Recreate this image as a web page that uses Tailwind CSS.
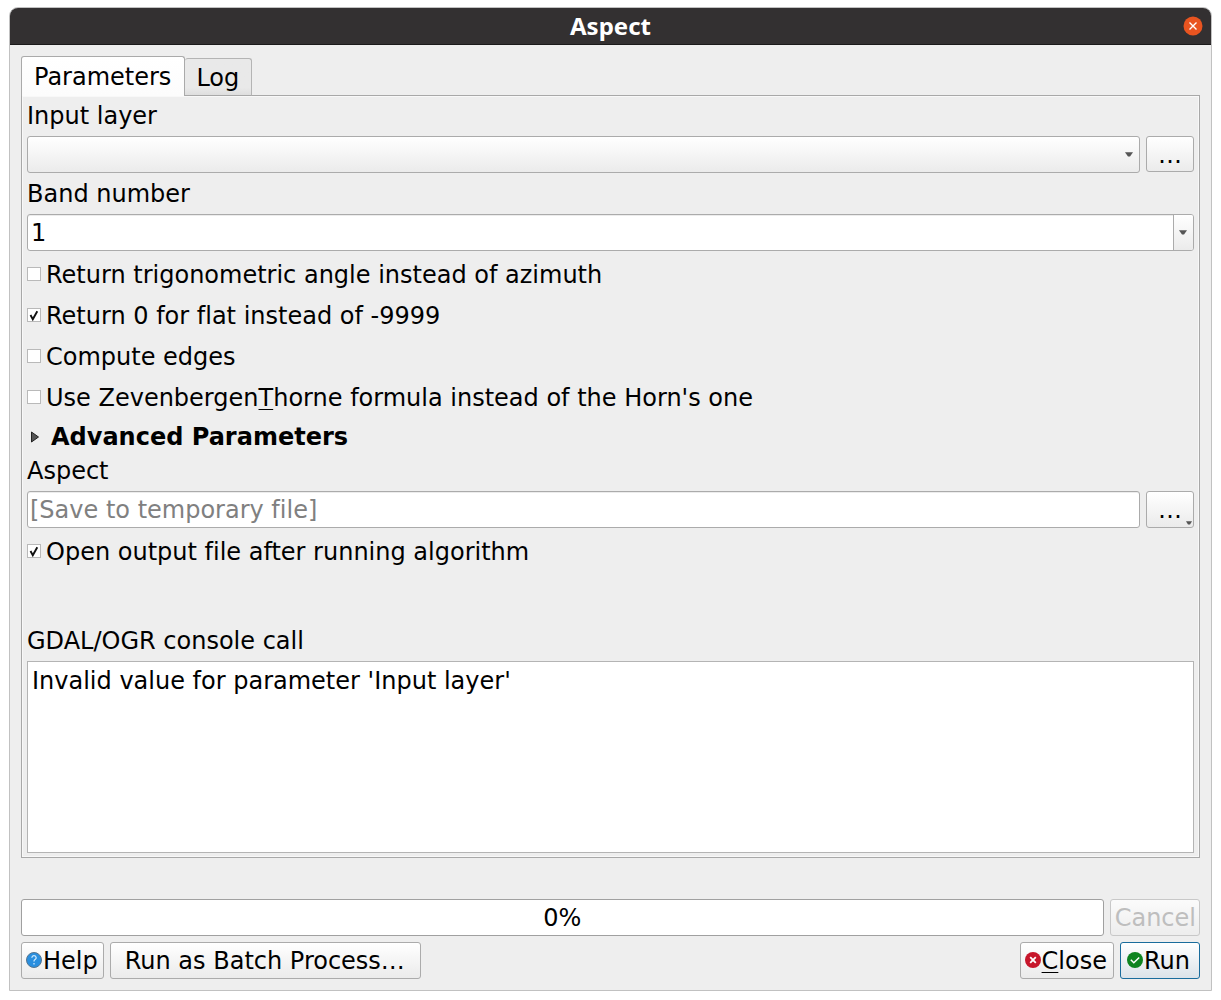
<!DOCTYPE html>
<html lang="en">
<head>
<meta charset="utf-8">
<title>Aspect</title>
<script src="https://cdn.jsdelivr.net/npm/@tailwindcss/browser@4"></script>
</head>
<body class="flex min-h-screen flex-col bg-white px-[9px] pt-[7px] pb-[9px] font-['DejaVu_Sans',sans-serif] text-2xl leading-7 text-black [font-variant-ligatures:none]">
<div role="dialog" aria-labelledby="title" class="flex flex-1 flex-col rounded-t-[9px] border border-[#c1c1c1] bg-[#eeeeee]">
  <header class="flex h-[37px] items-center rounded-t-lg border-b border-[#1b1a1a] bg-[#333031] px-2">
    <span class="w-5"></span>
    <h1 id="title" class="flex-1 text-center font-['Noto_Sans',sans-serif] font-bold text-white">Aspect</h1>
    <button aria-label="Close window" class="flex size-5 items-center justify-center">
      <svg class="size-5" viewBox="0 0 20 20"><circle cx="10" cy="10" r="9.5" fill="#e95420"/><path d="M6.5 6.5l7 7m0-7l-7 7" stroke="#fff" stroke-width="1.4"/></svg>
    </button>
  </header>

  <main class="flex flex-1 flex-col px-[11px] pt-[11px] pb-[11px]">
    <div role="tablist" class="z-10 -mb-px flex items-end">
      <button role="tab" aria-selected="true" class="h-10 rounded-t-[3px] border border-b-0 border-[#aaaaaa] bg-linear-to-b from-white to-[#fcfcfc] pr-[13px] pl-3">Parameters</button>
      <button role="tab" aria-selected="false" class="h-[38px] rounded-t-[3px] border border-l-0 border-[#b4b4b4] border-b-[#a8a8a8] bg-linear-to-b from-[#e9e9e9] from-80% to-[#dedede] pt-0.5 pr-3 pl-[11px]">Log</button>
    </div>

    <section class="flex flex-1 flex-col gap-1.5 border border-[#a8a8a8] px-[5px] pt-[5px] pb-1 inset-ring inset-ring-[#f8f8f8]">
      <label for="layer" class="pt-px">Input layer</label>
      <div class="flex gap-1.5">
        <div class="relative flex-1">
          <select id="layer" class="block h-[37px] w-full appearance-none rounded-[3px] border border-[#ababab] bg-linear-to-b from-white to-[#ebebeb] px-1"><option></option></select>
          <svg class="pointer-events-none absolute top-4 right-[7px] h-[5px] w-2" viewBox="0 0 8 5"><path d="M0 .2h8L5 4.500H3z" fill="#555"/></svg>
        </div>
        <button aria-label="Browse input layer" class="h-9 w-12 rounded-[3px] border border-[#ababab] bg-linear-to-b from-white to-[#ebebeb] pt-0.5">…</button>
      </div>

      <label for="band" class="pt-px">Band number</label>
      <div class="relative">
        <input id="band" value="1" class="block h-[37px] w-full rounded-[3px] border border-[#ababab] bg-white pr-6 pl-[3px] inset-shadow-[0_1px_0_#ececec]">
        <button aria-label="Show bands" class="absolute inset-y-px right-px flex w-5 items-center justify-center rounded-r-[2px] border-l border-[#ababab] bg-linear-to-b from-white to-[#ebebeb] pr-0.5">
          <svg class="h-[5px] w-2" viewBox="0 0 8 5"><path d="M0 .2h8L5 4.500H3z" fill="#555"/></svg>
        </button>
      </div>

      <label class="flex h-[35px] items-start gap-[5px] pt-1"><input type="checkbox" class="mt-1.5 size-3.5 appearance-none border border-[#b9b9b9] bg-white">Return trigonometric angle instead of azimuth</label>
      <label class="relative flex h-[35px] items-start gap-[5px] pt-1"><input type="checkbox" checked class="peer mt-1.5 size-3.5 appearance-none border border-[#b9b9b9] bg-white"><svg class="pointer-events-none absolute top-2.5 left-0 size-3.5 opacity-0 peer-checked:opacity-100" viewBox="0 0 14 14" fill="none"><path d="M3.500 7l2.300 4.200L10.300 3.300" stroke="#111" stroke-width="1.900"/></svg>Return 0 for flat instead of -9999</label>
      <label class="flex h-[35px] items-start gap-[5px] pt-1"><input type="checkbox" class="mt-1.5 size-3.5 appearance-none border border-[#b9b9b9] bg-white">Compute edges</label>
      <label class="flex h-[35px] items-start gap-[5px] pt-1"><input type="checkbox" class="mt-1.5 size-3.5 appearance-none border border-[#b9b9b9] bg-white"><span>Use Zevenbergen<span class="underline decoration-1 underline-offset-3">T</span>horne formula instead of the Horn's one</span></label>

      <button aria-expanded="false" class="flex h-[29px] items-center gap-3 self-start pt-0.5 pl-1 font-bold">
        <svg class="h-3 w-2" viewBox="0 0 8 12"><path d="M.5 1L7.500 6 .5 11z" fill="#555" stroke="#222"/></svg>Advanced Parameters
      </button>

      <label for="output" class="pt-px">Aspect</label>
      <div class="flex gap-1.5">
        <input id="output" placeholder="[Save to temporary file]" class="block h-[37px] min-w-0 flex-1 rounded-[3px] border border-[#ababab] bg-white px-0.5 inset-shadow-[0_1px_0_#ececec] placeholder:text-[#808080]">
        <button aria-label="Choose output" class="relative h-[37px] w-12 rounded-[3px] border border-[#ababab] bg-linear-to-b from-white to-[#ebebeb]">…
          <svg class="absolute right-px bottom-0.5 h-1 w-1.5" viewBox="0 0 6 4"><path d="M0 .3h6L4 3.500H2z" fill="#555"/></svg>
        </button>
      </div>

      <label class="relative flex h-[35px] items-start gap-[5px] pt-1"><input type="checkbox" checked class="peer mt-1.5 size-3.5 appearance-none border border-[#b9b9b9] bg-white"><svg class="pointer-events-none absolute top-2.5 left-0 size-3.5 opacity-0 peer-checked:opacity-100" viewBox="0 0 14 14" fill="none"><path d="M3.500 7l2.300 4.200L10.300 3.300" stroke="#111" stroke-width="1.900"/></svg>Open output file after running algorithm</label>

      <label for="console" class="mt-[51px] pt-px">GDAL/OGR console call</label>
      <textarea id="console" readonly class="block w-full flex-1 resize-none border border-[#b4b4b4] bg-white px-1 py-[5px]">Invalid value for parameter 'Input layer'</textarea>
    </section>

    <div class="mt-[41px] flex gap-1.5">
      <div role="progressbar" aria-label="Progress" aria-valuenow="0" class="flex h-[37px] flex-1 items-center justify-center rounded-[3px] border border-[#a0a0a0] bg-white pt-px">0%</div>
      <button disabled class="h-[37px] rounded-[3px] border border-[#c8c8c8] bg-linear-to-b from-[#fbfbfb] to-[#ededed] pt-px pr-[3px] pl-1 text-[#bebebe]">Cancel</button>
    </div>

    <footer class="mt-1.5 flex gap-1.5">
      <button class="flex h-[37px] items-center gap-px rounded-[3px] border border-[#ababab] bg-linear-to-b from-white to-[#ebebeb] pt-px pr-[5px] pl-1">
        <svg class="-mt-0.5 size-4" viewBox="0 0 16 16"><circle cx="8" cy="8" r="7.500" fill="#2a8fdf" stroke="#55758f"/><path d="M5.800 5.700Q6 3.700 8 3.700T10.200 5.700Q10.200 6.800 9 7.600T8 9.500M8 11v1.500" fill="none" stroke="#d9efff" stroke-width="1.200"/></svg>Help
      </button>
      <button class="h-[37px] rounded-[3px] border border-[#ababab] bg-linear-to-b from-white to-[#ebebeb] pt-px pr-[15px] pl-3.5">Run as Batch Process…</button>
      <span class="flex-1"></span>
      <button class="flex h-[37px] items-center gap-px rounded-[3px] border border-[#ababab] bg-linear-to-b from-white to-[#ebebeb] pt-px pr-1.5 pl-1">
        <svg class="-mt-0.5 size-4" viewBox="0 0 16 16"><circle cx="8" cy="8" r="8" fill="#c7162b"/><path d="M5.200 5.200l5.600 5.600m0-5.600l-5.600 5.600" stroke="#fff" stroke-width="1.800"/></svg><span><span class="underline decoration-1 underline-offset-3">C</span>lose</span>
      </button>
      <button class="flex h-[37px] items-center gap-px rounded-[3px] border border-[#196c9c] bg-linear-to-b from-white to-[#dbe3e9] pt-px pr-[9px] pl-1.5">
        <svg class="-mt-0.5 size-4" viewBox="0 0 16 16"><circle cx="8" cy="8" r="8" fill="#0e8420"/><path d="M3.800 7.800l3 2.900 5.400-5.200" fill="none" stroke="#fff" stroke-width="1.500"/></svg>Run
      </button>
    </footer>
  </main>
</div>
</body>
</html>
